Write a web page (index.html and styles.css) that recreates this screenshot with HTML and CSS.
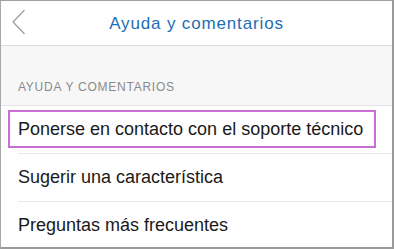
FILE: index.html
```html
<!DOCTYPE html>
<html lang="es">
<head>
<meta charset="utf-8">
<link rel="stylesheet" href="styles.css">
</head>
<body>
<div class="frame">
  <header class="topbar">
    <svg class="back" width="14" height="28" viewBox="0 0 14 28"><path d="M12.5 1 L1 13 L12.5 25" fill="none" stroke="#9a9a9a" stroke-width="1.2"/></svg>
    <h1 class="title">Ayuda y comentarios</h1>
  </header>
  <div class="section">AYUDA Y COMENTARIOS</div>
  <ul class="list">
    <li class="row"><span class="highlight"></span>Ponerse en contacto con el soporte técnico</li>
    <li class="row">Sugerir una característica</li>
    <li class="row last">Preguntas más frecuentes</li>
  </ul>
</div>
</body>
</html>
```
FILE: styles.css
```css
html, body { margin: 0; padding: 0; }
body { width: 394px; height: 249px; overflow: hidden; font-family: "Liberation Sans", Arial, sans-serif; }
.frame {
  box-sizing: border-box;
  width: 394px; height: 249px;
  border-top: 1px solid #a0a0a0;
  border-left: 1px solid #a8a8a8;
  border-right: 2px solid #9a9a9a;
  border-bottom: 2px solid #9a9a9a;
  background: #fff;
  display: flex; flex-direction: column;
  overflow: hidden;
}
.topbar {
  flex-shrink: 0;
  position: relative;
  height: 44px;
  display: flex; align-items: center; justify-content: center;
  border-bottom: 1px solid #dcdcdc;
  background: #fff;
}
.back { position: absolute; left: 11px; top: 8px; }
.title { margin: 0; font-weight: normal; font-size: 17px; color: #1e6db5; letter-spacing: 0.85px; padding-top: 2px; }
.section {
  flex-shrink: 0;
  height: 60px;
  box-sizing: border-box;
  background: #f7f7f7;
  border-bottom: 1px solid #e2e2e2;
  color: #8a8a8a;
  font-size: 12px;
  padding: 34px 0 0 17px;
  letter-spacing: 0.75px;
}
.list { flex-shrink: 0; list-style: none; margin: 0; padding: 0 0 0 17px; }
.row {
  position: relative;
  height: 47px;
  border-bottom: 1px solid #e6e6e6;
  display: flex; align-items: center;
  font-size: 18px; color: #1a1a1a;
  letter-spacing: 0;
}
.row.last { border-bottom: none; }
.highlight {
  position: absolute; left: -10px; top: 4px;
  width: 368px; height: 38px; box-sizing: border-box;
  border: 2px solid #c76fd2;
}
```
